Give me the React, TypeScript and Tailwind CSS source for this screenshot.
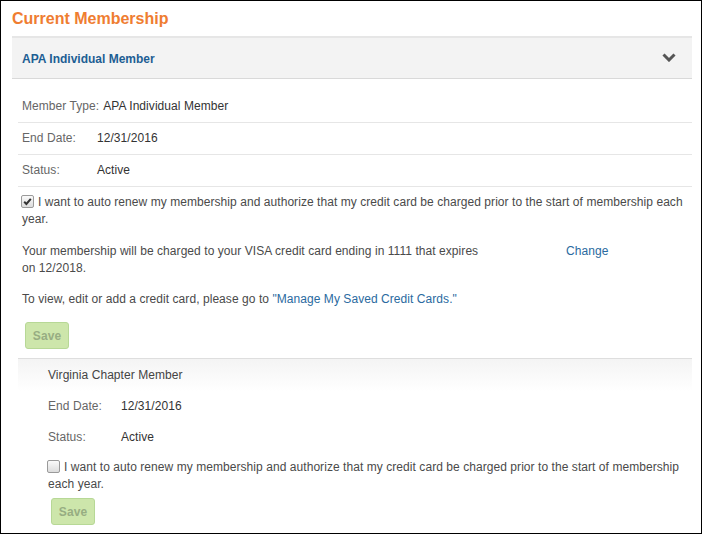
import React from "react";

function Check({ checked }: { checked?: boolean }) {
  return (
    <span className="inline-block align-[-2px] w-[13px] h-[13px] mr-[4px] -ml-[1px] rounded-[2px] border border-[#9a9a9a] bg-gradient-to-b from-[#fafafa] to-[#dcdcdc] relative">
      {checked && (
        <svg viewBox="0 0 13 13" className="absolute left-[-1px] top-[-1px] w-[13px] h-[13px]">
          <path d="M3.2 6.8 L5.4 9 L9.8 3.8" fill="none" stroke="#333" strokeWidth="2" />
        </svg>
      )}
    </span>
  );
}

function SaveBtn() {
  return (
    <button className="w-[44px] h-[27px] rounded-[3px] border border-[#b7d896] bg-[#cde6ab] text-[12px] font-bold text-[#97ad82] leading-none">
      Save
    </button>
  );
}

export default function App() {
  return (
    <div className="w-[702px] h-[534px] border border-black bg-white overflow-hidden text-[12px] leading-[17px] tracking-[0.06px] text-[#4a4a4a]" style={{ fontFamily: '"Liberation Sans", Arial, sans-serif' }}>
      <div className="pl-[11px] pt-[8px] h-[35px]">
        <h1 className="text-[16px] leading-[20px] font-bold tracking-normal text-[#ef7d31]">Current Membership</h1>
      </div>
      <div className="ml-[11px] mr-[9px] h-[43px] border-t-2 border-t-[#e6e6e6] border-b border-b-[#d9d9d9] bg-[#f3f3f3] flex items-center justify-between pl-[10px] pr-[16px] pt-[3px]">
        <span className="font-bold tracking-normal text-[#1d5e93]">APA Individual Member</span>
        <svg width="14" height="9" viewBox="0 0 14 9" className="-mt-[5px]">
          <polyline points="1.5,1.5 7,7 12.5,1.5" fill="none" stroke="#555" strokeWidth="3" />
        </svg>
      </div>
      <div className="ml-[17px] mr-[9px] pt-[12px]">
        <div className="h-[32px] flex items-center pl-[4px] border-b border-[#e6e6e6]">
          <span className="text-[#666]">Member Type:</span>
          <span className="ml-[4px] text-[#333]">APA Individual Member</span>
        </div>
        <div className="h-[32px] flex items-center pl-[4px] border-b border-[#e6e6e6]">
          <span className="w-[75px] text-[#666]">End Date:</span>
          <span className="text-[#333]">12/31/2016</span>
        </div>
        <div className="h-[32px] flex items-center pl-[4px] border-b border-[#e6e6e6]">
          <span className="w-[75px] text-[#666]">Status:</span>
          <span className="text-[#333]">Active</span>
        </div>
        <div className="pl-[4px] pt-[7px]">
          <p>
            <Check checked />I want to auto renew my membership and authorize that my credit card be charged prior to the start of membership each year.
          </p>
          <div className="mt-[15px] flex">
            <p className="w-[465px]">Your membership will be charged to your VISA credit card ending in 1111 that expires on 12/2018.</p>
            <a className="ml-[79px] text-[#2a6aa0]">Change</a>
          </div>
          <p className="mt-[14px]">
            To view, edit or add a credit card, please go to <a className="text-[#2a6aa0]">"Manage My Saved Credit Cards."</a>
          </p>
          <div className="mt-[14px] ml-[3px]">
            <SaveBtn />
          </div>
        </div>
        <div className="mt-[9px] border-t border-[#dedede]">
          <div className="h-[32px] flex items-center pl-[30px] bg-gradient-to-b from-[#f4f4f4] to-white">
            <span className="text-[#444]">Virginia Chapter Member</span>
          </div>
          <div className="h-[31px] flex items-center pl-[30px]">
            <span className="w-[73px] text-[#666]">End Date:</span>
            <span className="text-[#333]">12/31/2016</span>
          </div>
          <div className="h-[31px] flex items-center pl-[30px]">
            <span className="w-[73px] text-[#666]">Status:</span>
            <span className="text-[#333]">Active</span>
          </div>
          <div className="pl-[30px] pt-[6px]">
            <p>
              <Check />I want to auto renew my membership and authorize that my credit card be charged prior to the start of membership each year.
            </p>
            <div className="mt-[5px] ml-[3px]">
              <SaveBtn />
            </div>
          </div>
        </div>
      </div>
    </div>
  );
}
